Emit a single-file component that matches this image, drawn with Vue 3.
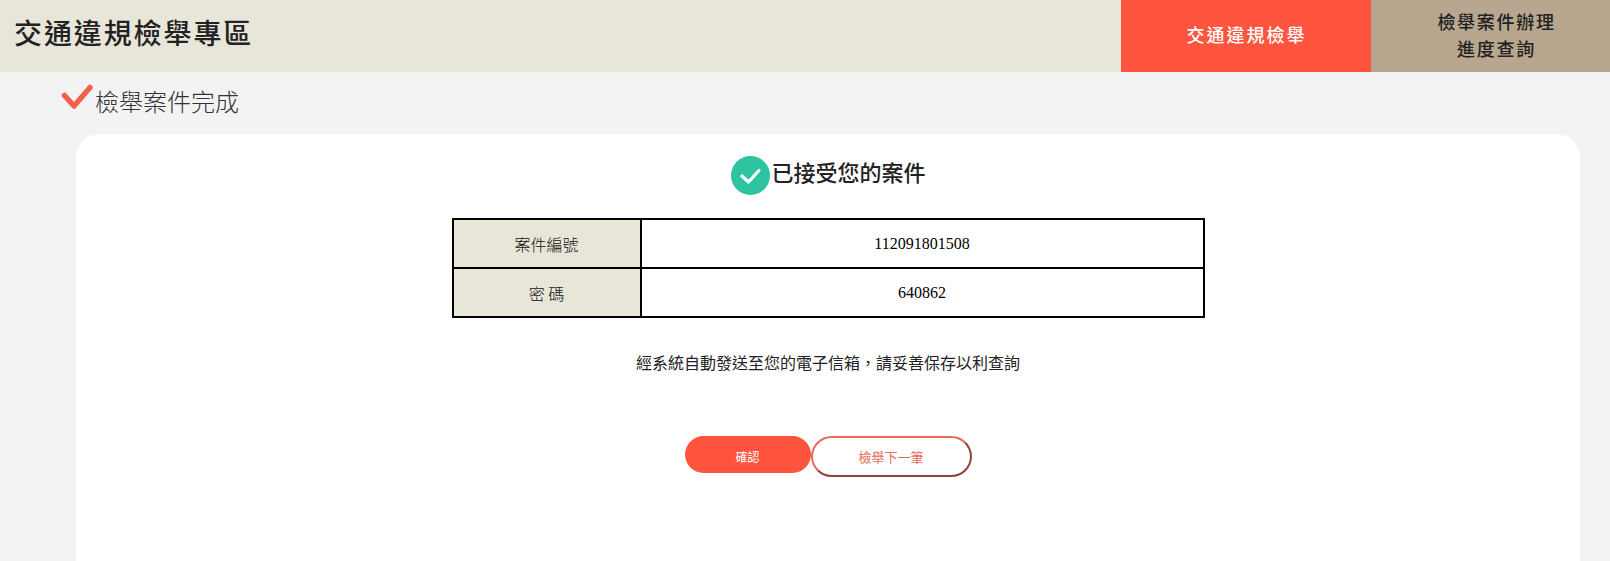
<template>
  <div class="page">
    <header class="topbar">
      <h1 class="site-title">交通違規檢舉專區</h1>
      <nav class="nav">
        <a class="nav-item active">交通違規檢舉</a>
        <a class="nav-item">檢舉案件辦理<br>進度查詢</a>
      </nav>
    </header>

    <main class="content">
      <h2 class="section-title">
        <svg class="tick" viewBox="0 0 32 27" width="32" height="27">
          <path d="M3.5 11.5 L13 22 L29 3.5" fill="none" stroke="#f1624c" stroke-width="5.5" stroke-linecap="round" stroke-linejoin="round" />
        </svg>
        <span>檢舉案件完成</span>
      </h2>

      <section class="card">
        <div class="result">
          <svg class="result-icon" viewBox="0 0 39 39" width="39" height="39">
            <circle cx="19.5" cy="19.5" r="19.5" fill="#2ec4a2" />
            <path d="M11 20 L17.5 26 L28 14.5" fill="none" stroke="#fff" stroke-width="3.2" stroke-linecap="round" stroke-linejoin="round" />
          </svg>
          <span>已接受您的案件</span>
        </div>

        <table class="info">
          <tbody>
            <tr v-for="row in rows" :key="row.label">
              <th>{{ row.label }}</th>
              <td>{{ row.value }}</td>
            </tr>
          </tbody>
        </table>

        <p class="note">經系統自動發送至您的電子信箱&#xFF0C;請妥善保存以利查詢</p>

        <div class="actions">
          <button class="btn primary">確認</button>
          <button class="btn secondary">檢舉下一筆</button>
        </div>
      </section>
    </main>
  </div>
</template>

<script setup>
  const rows = [
    { label: '案件編號', value: '112091801508' },
    { label: '密 碼', value: '640862' }
  ]
</script>

<style>
  html, body {
    margin: 0;
    background: #f3f3f4;
    overflow: hidden;
  }
</style>

<style scoped>
  .page {
    height: 561px;
    overflow: hidden;
    font-family: "Noto Sans CJK TC", "Noto Sans", sans-serif;
    color: #222;
  }
  .topbar {
    display: flex;
    justify-content: space-between;
    height: 72px;
    background: #e8e5d9;
  }
  .site-title {
    margin: 0;
    padding-left: 14px;
    font-size: 28px;
    font-weight: 500;
    letter-spacing: 1.9px;
    line-height: 64px;
  }
  .nav {
    display: flex;
  }
  .nav-item {
    display: flex;
    align-items: center;
    justify-content: center;
    text-align: center;
    box-sizing: border-box;
    width: 239px;
    padding: 0 0 2px 12px;
    font-size: 18px;
    font-weight: 500;
    line-height: 27px;
    letter-spacing: 1.7px;
    background: #b8a68f;
  }
  .nav-item.active {
    width: 250px;
    padding: 0 0 4px 1px;
    letter-spacing: 2px;
    color: #fff;
    background: #ff553e;
  }
  .content {
    padding: 12px 30px 0 61px;
  }
  .section-title {
    display: flex;
    align-items: flex-start;
    gap: 2px;
    height: 50px;
    margin: 0;
    font-size: 24px;
    font-weight: 300;
    line-height: 36px;
    color: #333;
  }
  .tick {
    flex: none;
  }
  .section-title span {
    margin-top: -1px;
  }
  .card {
    margin-left: 15px;
    height: 500px;
    padding-top: 22px;
    background: #fff;
    border-radius: 24px;
    display: flex;
    flex-direction: column;
    align-items: center;
  }
  .result {
    display: flex;
    align-items: center;
    gap: 1px;
    height: 39px;
    margin-left: 1px;
    font-size: 22px;
    font-weight: 500;
    color: #222;
  }
  .result span {
    margin-top: -9px;
  }
  .result-icon {
    flex: none;
  }
  .info {
    width: 753px;
    margin-top: 23px;
    border-collapse: collapse;
    border: 2px solid #000;
    font-size: 16px;
  }
  .info th, .info td {
    border: 2px solid #000;
    text-align: center;
    padding: 0;
    height: 47px;
  }
  .info th {
    width: 186px;
    background: #e8e5d9;
    font-weight: 300;
    color: #111;
  }
  .info td {
    font-family: "Liberation Serif", serif;
    color: #000;
  }
  .note {
    margin: 32px 0 0;
    font-size: 16px;
    line-height: 24px;
    font-weight: 400;
    color: #222;
  }
  .actions {
    display: flex;
    align-items: flex-start;
    margin-top: 62px;
  }
  .btn {
    font-family: inherit;
    border-radius: 21px;
  }
  .primary {
    width: 126px;
    height: 37px;
    border: 0;
    padding: 3px 0 0;
    background: #ff553e;
    color: #fff;
    font-size: 12px;
  }
  .secondary {
    width: 161px;
    height: 41px;
    border: 2px outset #e8695a;
    padding: 0;
    background: #fff;
    color: #e8695a;
    font-size: 13px;
  }
</style>
